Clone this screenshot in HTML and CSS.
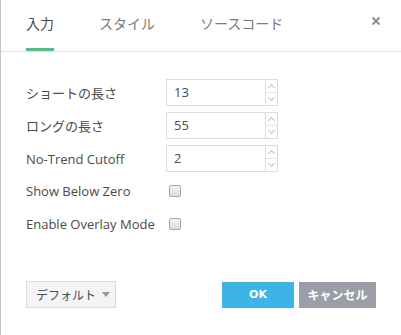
FILE: index.html
```html
<!DOCTYPE html>
<html lang="ja">
<head>
<meta charset="utf-8">
<link rel="stylesheet" href="styles.css">
</head>
<body>
<div class="dialog">
  <div class="tabs">
    <div class="tab active">入力</div>
    <div class="tab">スタイル</div>
    <div class="tab">ソースコード</div>
    <div class="close">
      <svg width="10" height="10" viewBox="0 0 10 10"><path d="M1.5 1.5L8.5 8.5M8.5 1.5L1.5 8.5" stroke="#8a8d94" stroke-width="2"/></svg>
    </div>
  </div>
  <div class="content">
    <div class="row">
      <div class="label">ショートの長さ</div>
      <div class="spin"><div class="val">13</div><div class="arrows"><span class="up"></span><span class="down"></span></div></div>
    </div>
    <div class="row">
      <div class="label">ロングの長さ</div>
      <div class="spin"><div class="val">55</div><div class="arrows"><span class="up"></span><span class="down"></span></div></div>
    </div>
    <div class="row">
      <div class="label">No-Trend Cutoff</div>
      <div class="spin"><div class="val">2</div><div class="arrows"><span class="up"></span><span class="down"></span></div></div>
    </div>
    <div class="crow first">
      <div class="label en">Show Below Zero</div>
      <div class="check"></div>
    </div>
    <div class="crow">
      <div class="label en">Enable Overlay Mode</div>
      <div class="check"></div>
    </div>
  </div>
  <div class="footer">
    <div class="defaults">デフォルト <span class="caret"></span></div>
    <div class="btns">
      <div class="btn ok">OK</div>
      <div class="btn cancel">キャンセル</div>
    </div>
  </div>
</div>
</body>
</html>
```
FILE: styles.css
```css
* { box-sizing: border-box; }
html, body { margin: 0; padding: 0; background: #fff; }
body {
  font-family: "Open Sans", "Noto Sans CJK JP", sans-serif;
  color: #4a4a4a;
  width: 401px;
  height: 335px;
  overflow: hidden;
}
.dialog {
  height: 335px;
  border-left: 1px solid #c4c4c4;
  display: flex;
  flex-direction: column;
}
.tabs {
  display: flex;
  align-items: flex-start;
  height: 52px;
  border-bottom: 1px solid #e0e0e0;
  padding-left: 25px;
}
.tab {
  font-family: "Noto Sans CJK JP", sans-serif;
  font-size: 14px;
  line-height: 20px;
  color: #7a7a7a;
  padding-top: 13px;
  height: 51px;
  margin-right: 45px;
  border-bottom: 3px solid transparent;
}
.tab.active {
  color: #4a4a4a;
  border-bottom-color: #5cb98a;
}
.close {
  margin-left: auto;
  margin-right: 20px;
  padding-top: 16px;
}
.close svg { display: block; }
.content {
  padding: 27px 0 0 25px;
  flex: 1;
}
.row {
  display: flex;
  align-items: center;
  height: 27px;
  margin-bottom: 6px;
}
.label {
  width: 140px;
  font-size: 13px;
  font-family: "Noto Sans CJK JP", sans-serif;
  color: #4a4a4a;
}
.row .label { font-family: "Open Sans", "Noto Sans CJK JP", sans-serif; }
.spin {
  display: flex;
  width: 112px;
  height: 27px;
  border: 1px solid #dcdcdc;
}
.val {
  flex: 1;
  font-size: 13px;
  padding-left: 7px;
  line-height: 25px;
  color: #4a4a4a;
  border-right: 1px solid #dcdcdc;
}
.arrows {
  width: 11px;
  display: flex;
  flex-direction: column;
}
.arrows span {
  flex: 1;
  position: relative;
}
.arrows .up { border-bottom: 1px solid #e6e6e6; }
.arrows span::after {
  content: "";
  position: absolute;
  left: 3px;
  width: 4px;
  height: 4px;
  border-left: 1px solid #b8c4cc;
  border-top: 1px solid #b8c4cc;
}
.arrows .up::after { top: 5px; transform: rotate(45deg); }
.arrows .down::after { top: 2px; transform: rotate(225deg); }
.crow {
  display: flex;
  align-items: center;
  height: 26px;
  margin-bottom: 7px;
}
.crow.first { margin-top: 3px; }
.label.en {
  width: 143px;
  font-family: "Open Sans", sans-serif;
}
.check {
  width: 12px;
  height: 12px;
  border: 1px solid #a8a8a8;
  border-radius: 2px;
  background: linear-gradient(#f2f2f2, #dcdcdc);
}
.footer {
  display: flex;
  align-items: center;
  justify-content: space-between;
  padding: 0 25px 27px 25px;
}
.defaults {
  width: 90px;
  height: 27px;
  border: 1px solid #dcdcdc;
  background: #f3f4f6;
  font-family: "Noto Sans CJK JP", sans-serif;
  font-size: 12px;
  color: #4a4a4a;
  display: flex;
  align-items: center;
  padding-left: 9px;
  gap: 4px;
}
.caret {
  width: 0; height: 0;
  border-left: 4px solid transparent;
  border-right: 4px solid transparent;
  border-top: 5px solid #999;
  margin-left: 2px;
}
.btns { display: flex; gap: 5px; }
.btn {
  height: 26px;
  display: flex;
  align-items: center;
  justify-content: center;
  color: #fff;
  font-family: "Noto Sans CJK JP", sans-serif;
  font-weight: bold;
  font-size: 12px;
}
.ok { width: 72px; background: #3db4e5; font-family: "DejaVu Sans", sans-serif; font-size: 11px; }
.cancel { width: 77px; background: #9b9ea6; }
```
